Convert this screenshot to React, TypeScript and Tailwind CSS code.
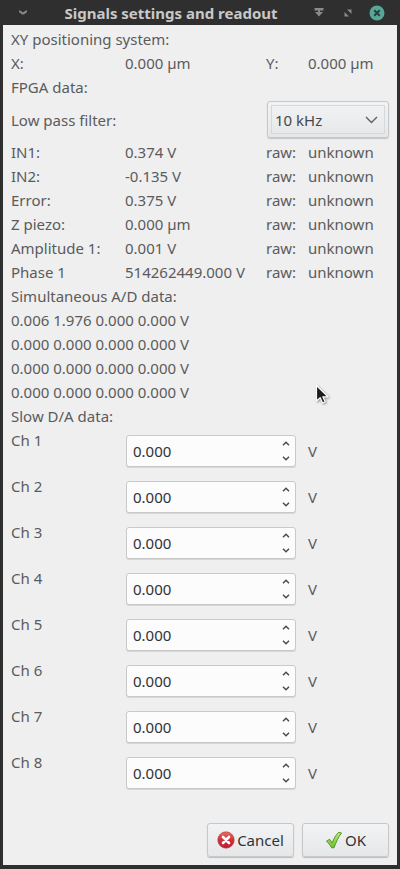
import { useState } from 'react';

const READINGS = [
  { label: 'IN1:', value: '0.374 V', raw: 'unknown' },
  { label: 'IN2:', value: '-0.135 V', raw: 'unknown' },
  { label: 'Error:', value: '0.375 V', raw: 'unknown' },
  { label: 'Z piezo:', value: '0.000 µm', raw: 'unknown' },
  { label: 'Amplitude 1:', value: '0.001 V', raw: 'unknown' },
  { label: 'Phase 1', value: '514262449.000 V', raw: 'unknown' },
];

const AD_ROWS = [
  '0.006 1.976 0.000 0.000 V',
  '0.000 0.000 0.000 0.000 V',
  '0.000 0.000 0.000 0.000 V',
  '0.000 0.000 0.000 0.000 V',
];

const CHANNELS = [1, 2, 3, 4, 5, 6, 7, 8];

const FILTERS = ['1 kHz', '10 kHz', '100 kHz'];

function TitleBar() {
  return (
    <header className="flex h-[25px] shrink-0 items-center bg-[#2f2f2f] pr-[15px] pl-[15px] text-[#8a8a8a]">
      <button aria-label="Window menu" className="flex h-4 w-4 items-center justify-center">
        <svg width="10" height="6" viewBox="0 0 10 6" fill="none" stroke="currentColor" strokeWidth="2">
          <path d="M1 1.2c1.8 0 2.6 2.3 4 2.3s2.200-2.300 4-2.300" />
        </svg>
      </button>
      <h1 className="flex-1 text-center text-[15px] leading-6 font-bold whitespace-nowrap text-[#c8c8c8]">
        Signals settings and readout
      </h1>
      <div className="flex items-center gap-[13px]">
        <button aria-label="Keep above" className="flex h-4 w-4 items-center justify-center">
          <svg width="10" height="9" viewBox="0 0 10 9" fill="currentColor">
            <path d="M0.500 0h9v2.500h-9zM4 2.500h2V4h3L5 8.500 1 4h3z" />
          </svg>
        </button>
        <button aria-label="Maximize" className="flex h-4 w-4 items-center justify-center">
          <svg width="8" height="8" viewBox="0 0 8 8" fill="currentColor">
            <path d="M3 0.500h4.500V5zM0.500 3v4.500H5z" />
          </svg>
        </button>
        <button aria-label="Close" className="flex h-4 w-4 items-center justify-center">
          <svg className="shrink-0" width="16" height="16" viewBox="0 0 16 16">
            <circle cx="8" cy="8" r="7.500" fill="#56a797" />
            <path d="M5.300 5.300l5.400 5.400M10.700 5.300l-5.400 5.400" stroke="#2b3d3a" strokeWidth="2" />
          </svg>
        </button>
      </div>
    </header>
  );
}

function FilterSelect() {
  const [filter, setFilter] = useState('10 kHz');

  return (
    <div className="relative w-[122px] rounded-[3px] border border-[#c6c8ca] bg-linear-to-b from-[#f2f3f4] to-[#e5e7e9] p-[3px] shadow-[0_1px_1px_#c4c4c4]">
      <select
        id="low-pass"
        value={filter}
        onChange={(e) => setFilter(e.target.value)}
        className="block h-[29px] w-full appearance-none border border-[#d5d8da] bg-transparent pl-[3px] text-[#45484a]"
      >
        {FILTERS.map((f) => (
          <option key={f}>{f}</option>
        ))}
      </select>
      <svg
        className="pointer-events-none absolute top-[14px] right-[10px]"
        width="13" height="8" viewBox="0 0 13 8" fill="none" stroke="#5c6063" strokeWidth="1.400"
      >
        <path d="M1 1l5.500 5.500L12 1" />
      </svg>
    </div>
  );
}

function ChannelRow({ channel }: { channel: number }) {
  const [value, setValue] = useState('0.000');
  const id = `channel-${channel}`;

  const step = (delta: number) => setValue((prev) => ((parseFloat(prev) || 0) + delta).toFixed(3));

  return (
    <div className="flex h-[46px] items-center">
      <label htmlFor={id} className="w-[115px] self-start">Ch {channel}</label>
      <div className="flex h-8 w-[170px] rounded-[3px] border border-[#c9c9c9] bg-[#fcfcfc] shadow-[0_1px_0_#d6d6d6]">
        <input
          id={id}
          value={value}
          onChange={(e) => setValue(e.target.value)}
          inputMode="decimal"
          className="min-w-0 flex-1 bg-transparent pl-[6px] text-[#303336] outline-none"
        />
        <div className="flex w-[18px] flex-col text-[#4a4d50]">
          <button aria-label={`Increase channel ${channel}`} onClick={() => step(0.1)} className="flex flex-1 items-center justify-center">
            <svg width="8" height="5" viewBox="0 0 8 5" fill="none" stroke="currentColor" strokeWidth="1.500">
              <path d="M1 4.200L4 1.200l3 3" />
            </svg>
          </button>
          <button aria-label={`Decrease channel ${channel}`} onClick={() => step(-0.1)} className="flex flex-1 items-center justify-center">
            <svg width="8" height="5" viewBox="0 0 8 5" fill="none" stroke="currentColor" strokeWidth="1.500">
              <path d="M1 0.800l3 3 3-3" />
            </svg>
          </button>
        </div>
      </div>
      <span className="ml-3">V</span>
    </div>
  );
}

function CancelIcon() {
  return (
    <svg width="18" height="18" viewBox="0 0 18 18">
      <defs>
        <linearGradient id="cancel-fill" x1="0" y1="0" x2="0" y2="1">
          <stop offset="0" stopColor="#e8705f" />
          <stop offset="0.500" stopColor="#cf3038" />
          <stop offset="1" stopColor="#b81c30" />
        </linearGradient>
      </defs>
      <circle cx="9" cy="9" r="8.200" fill="url(#cancel-fill)" stroke="#b5303a" strokeWidth="0.600" />
      <path d="M6 6l6 6M12 6l-6 6" stroke="#fff" strokeWidth="2.600" strokeLinecap="round" />
    </svg>
  );
}

function OkIcon() {
  return (
    <svg width="18" height="18" viewBox="0 0 18 18">
      <defs>
        <linearGradient id="ok-fill" x1="0" y1="0" x2="0" y2="1">
          <stop offset="0" stopColor="#b8ee78" />
          <stop offset="1" stopColor="#6cc02c" />
        </linearGradient>
      </defs>
      <path
        d="M1.500 10l3.200-1.700 2.600 3.700C8.700 7.500 11 3.700 13.700 1.300l2.800 0.700c-3.100 3.900-5.600 9.200-7.300 14.600l-2.400 0.300C5.300 14.500 3.500 12 1.500 10z"
        fill="url(#ok-fill)" stroke="#58952f" strokeWidth="1" strokeLinejoin="round"
      />
    </svg>
  );
}

const dialogButton =
  'flex h-[34px] w-[87px] items-center justify-center gap-[2px] rounded-[3px] border border-[#c6c8ca] bg-linear-to-b from-[#f2f3f4] to-[#e5e7e9] text-[#303336] shadow-[0_1px_1px_#bcbcbc]';

export default function App() {
  return (
    <div className="relative flex min-h-screen flex-col bg-[#2f2f2f] font-['Noto_Sans',sans-serif] text-[15px] leading-6 text-[#5a5b5c]">
      <TitleBar />
      <main className="mx-[3px] mb-[4px] flex flex-1 flex-col bg-[#efefef] px-2 pt-[2px] pb-2">
        <h2>XY positioning system:</h2>
        <div className="grid grid-cols-[114px_141px_42px_1fr]">
          <span>X:</span>
          <span>0.000 µm</span>
          <span>Y:</span>
          <span>0.000 µm</span>
        </div>

        <h2>FPGA data:</h2>
        <div className="flex h-[41px] items-center justify-between">
          <label htmlFor="low-pass">Low pass filter:</label>
          <FilterSelect />
        </div>
        <table className="w-full table-fixed text-left whitespace-nowrap">
          <colgroup>
            <col className="w-[114px]" />
            <col className="w-[141px]" />
            <col className="w-[42px]" />
            <col />
          </colgroup>
          <tbody>
            {READINGS.map((r) => (
              <tr key={r.label}>
                <th scope="row" className="p-0 font-normal">{r.label}</th>
                <td className="p-0">{r.value}</td>
                <td className="p-0">raw:</td>
                <td className="p-0">{r.raw}</td>
              </tr>
            ))}
          </tbody>
        </table>

        <h2>Simultaneous A/D data:</h2>
        {AD_ROWS.map((row, i) => (
          <p key={i}>{row}</p>
        ))}

        <h2>Slow D/A data:</h2>
        {CHANNELS.map((channel) => (
          <ChannelRow key={channel} channel={channel} />
        ))}

        <div className="mt-auto flex justify-end gap-2">
          <button className={dialogButton}>
            <CancelIcon />
            Cancel
          </button>
          <button className={dialogButton}>
            <OkIcon />
            OK
          </button>
        </div>
      </main>

      {/* mouse pointer */}
      <svg
        className="pointer-events-none absolute top-[384px] left-[315px] drop-shadow-[1px_1px_1px_#00000066]"
        width="15" height="21" viewBox="0 0 15 21"
      >
        <path d="M1.500 1.500v15.500l3.700-3.300 2.400 5.300 2.500-1.200-2.300-5h5.200z" fill="#1c1c1c" stroke="#fff" strokeWidth="1.200" strokeLinejoin="round" />
      </svg>
    </div>
  );
}
